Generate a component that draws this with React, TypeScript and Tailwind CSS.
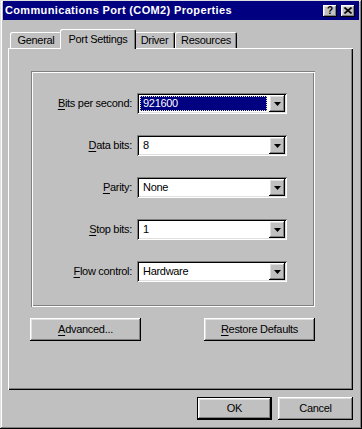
import React from "react";

const raised =
  "shadow-[inset_-1px_-1px_0_#000,inset_1px_1px_0_#fff,inset_-2px_-2px_0_#808080,inset_2px_2px_0_#dfdfdf]";

function Mn({ k, rest }: { k: string; rest: string }) {
  return (
    <span>
      <span className="underline underline-offset-[2px]">{k}</span>
      {rest}
    </span>
  );
}

function Combo({ value, selected }: { value: string; selected?: boolean }) {
  return (
    <div className="flex h-[21px] w-[150px] bg-white p-[2px] shadow-[inset_1px_1px_0_#808080,inset_-1px_-1px_0_#fff,inset_2px_2px_0_#000,inset_-2px_-2px_0_#dfdfdf]">
      {selected ? (
        <div className="m-[1px] mr-[2px] flex flex-1 items-center bg-[#000080] pl-[3px] text-white outline-1 outline-dotted outline-[#e8e8b0] -outline-offset-1">
          {value}
        </div>
      ) : (
        <div className="flex flex-1 items-center pl-[4px]">{value}</div>
      )}
      <div className={`flex w-[16px] items-center justify-center bg-[#c0c0c0] ${raised}`}>
        <svg width="7" height="4" viewBox="0 0 7 4">
          <polygon points="0,0 7,0 3.5,4" fill="#000" />
        </svg>
      </div>
    </div>
  );
}

export default function App() {
  const rows = [
    { k: "B", rest: "its per second:", value: "921600", selected: true },
    { k: "D", rest: "ata bits:", value: "8" },
    { k: "P", rest: "arity:", value: "None" },
    { k: "S", rest: "top bits:", value: "1" },
    { k: "F", rest: "low control:", value: "Hardware" },
  ];

  return (
    <div className="h-[429px] w-[362px] bg-[#c0c0c0] px-[3px] pt-[1px] text-[11px] tracking-[-0.3px] text-black [font-family:'Liberation_Sans',Arial,sans-serif] shadow-[inset_-1px_-1px_0_#000,inset_1px_1px_0_#dfdfdf,inset_-2px_-2px_0_#808080,inset_2px_2px_0_#fff]">
      {/* Title bar */}
      <div className="flex h-[19px] items-center justify-between bg-[#000080] pl-[2px] pr-[4px]">
        <span className="text-[11px] font-bold tracking-[0.35px] text-white">
          Communications Port (COM2) Properties
        </span>
        <div className="flex gap-[4px]">
          <div className={`flex h-[12px] w-[14px] items-center justify-center bg-[#c0c0c0] text-[10px] font-bold leading-none tracking-normal ${raised}`}>
            ?
          </div>
          <div className={`flex h-[12px] w-[14px] items-center justify-center bg-[#c0c0c0] ${raised}`}>
            <svg width="8" height="7" viewBox="0 0 8 7">
              <path d="M0.5 0.5 L7.5 6.5 M7.5 0.5 L0.5 6.5" stroke="#000" strokeWidth="1.6" />
            </svg>
          </div>
        </div>
      </div>

      <div className="pl-[5px] pt-[9px]">
        {/* Tabs */}
        <div className="flex h-[19px] items-end">
          <div className="ml-[2px] flex h-[16px] w-[52px] items-center justify-center rounded-t-[2px] shadow-[inset_1px_1px_0_#fff,inset_-1px_0_0_#000,inset_-2px_0_0_#808080]">
            General
          </div>
          <div className="relative z-10 -mx-[2px] -mb-[1px] flex h-[20px] w-[76px] items-start justify-center rounded-t-[2px] bg-[#c0c0c0] pt-[2px] shadow-[inset_1px_1px_0_#fff,inset_-1px_0_0_#000,inset_-2px_0_0_#808080]">
            Port Settings
          </div>
          <div className="flex h-[16px] w-[41px] items-center justify-center rounded-t-[2px] shadow-[inset_1px_1px_0_#fff,inset_-1px_0_0_#000,inset_-2px_0_0_#808080]">
            Driver
          </div>
          <div className="flex h-[16px] w-[62px] items-center justify-center rounded-t-[2px] shadow-[inset_1px_1px_0_#fff,inset_-1px_0_0_#000,inset_-2px_0_0_#808080]">
            Resources
          </div>
        </div>

        {/* Panel */}
        <div className="h-[342px] w-[345px] pl-[23px] pt-[23px] shadow-[inset_1px_1px_0_#fff,inset_-1px_-1px_0_#000,inset_-2px_-2px_0_#808080]">
          <div className="h-[236px] w-[284px] pt-[22px] shadow-[inset_1px_1px_0_#808080,inset_-1px_-1px_0_#fff,inset_2px_2px_0_#fff,inset_-2px_-2px_0_#808080]">
            <div className="grid grid-cols-[101px_150px] items-center gap-x-[5px] gap-y-[21px]">
              {rows.map((r) => (
                <React.Fragment key={r.k}>
                  <div className="text-right">
                    <Mn k={r.k} rest={r.rest} />
                  </div>
                  <Combo value={r.value} selected={r.selected} />
                </React.Fragment>
              ))}
            </div>
          </div>

          <div className="-ml-[1px] mt-[11px] flex w-[285px] justify-between">
            <button className={`h-[23px] w-[111px] bg-[#c0c0c0] ${raised}`}>
              <Mn k="A" rest="dvanced..." />
            </button>
            <button className={`h-[23px] w-[111px] bg-[#c0c0c0] ${raised}`}>
              <Mn k="R" rest="estore Defaults" />
            </button>
          </div>
        </div>

        {/* Dialog buttons */}
        <div className="mt-[7px] flex w-[345px] justify-end gap-[6px]">
          <button className="h-[23px] w-[75px] bg-[#c0c0c0] shadow-[inset_-1px_-1px_0_#000,inset_1px_1px_0_#000,inset_-2px_-2px_0_#000,inset_2px_2px_0_#fff,inset_-3px_-3px_0_#808080,inset_3px_3px_0_#dfdfdf]">
            OK
          </button>
          <button className={`h-[23px] w-[75px] bg-[#c0c0c0] ${raised}`}>Cancel</button>
        </div>
      </div>
    </div>
  );
}
